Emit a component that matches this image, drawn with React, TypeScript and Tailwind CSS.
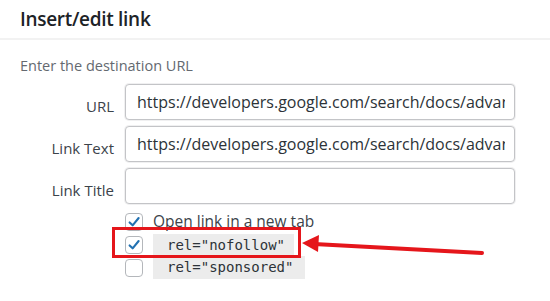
import React from 'react'

const url = 'https://developers.google.com/search/docs/advanced/guidelines/qualify-outbound-links'

function Check({ checked }: { checked?: boolean }) {
  return (
    <span className="flex h-[18px] w-[18px] shrink-0 items-center justify-center rounded-[4px] border border-[#b4b7bb] bg-white">
      {checked && (
        <svg viewBox="0 0 20 20" className="h-[18px] w-[18px]">
          <path d="M4.5 10.5 L8.3 14.2 L15.8 5" fill="none" stroke="#2271b1" strokeWidth={2.6} strokeLinecap="round" strokeLinejoin="round" />
        </svg>
      )}
    </span>
  )
}

function Field({ label, value }: { label: string; value?: string }) {
  return (
    <div className="flex items-center">
      <label className="w-[114px] shrink-0 pt-[8px] text-right text-[15px] text-[#3c434a]">{label}</label>
      <div className="ml-[11px] h-[36px] w-[390px] rounded-[4px] border border-[#c3c4c7] bg-white pl-[11px] pr-[9px] shadow-[0_0_0_1px_#f0f0f1]">
        <div className="overflow-hidden whitespace-nowrap text-[16px] leading-[34px] text-[#2c3338]">{value}</div>
      </div>
    </div>
  )
}

export default function App() {
  return (
    <div className="relative h-[301px] w-[550px] overflow-hidden bg-white" style={{ fontFamily: '"Open Sans", "Noto Sans", sans-serif' }}>
      <div className="flex h-[40px] items-center border-b-2 border-[#f2f2f2] px-[20px]">
        <h1 className="text-[19px] font-semibold tracking-[-0.3px] text-[#1d2327]">Insert/edit link</h1>
      </div>
      <p className="mt-[16px] pl-[20px] text-[14.5px] leading-[20px] text-[#646970]">Enter the destination URL</p>
      <div className="mt-[8px] flex flex-col gap-[6px]">
        <Field label="URL" value={url} />
        <Field label="Link Text" value={url} />
        <Field label="Link Title" />
      </div>
      <div className="ml-[125px] mt-[7px] flex flex-col">
        <div className="flex h-[21px] items-center gap-[10px]">
          <Check checked />
          <span className="text-[15.5px] text-[#3c434a]">Open link in a new tab</span>
        </div>
        <div className="mt-[2px] flex h-[22px] items-center gap-[10px]">
          <Check checked />
          <code className="bg-[#ececec] pl-[14px] pr-[9px] text-[14px] leading-[22px] text-[#2c3338]" style={{ fontFamily: '"DejaVu Sans Mono", monospace' }}>rel="nofollow"</code>
        </div>
        <div className="flex h-[23px] items-center gap-[10px]">
          <Check />
          <code className="bg-[#ececec] pl-[14px] pr-[12px] text-[14px] leading-[23px] text-[#2c3338]" style={{ fontFamily: '"DejaVu Sans Mono", monospace' }}>rel="sponsored"</code>
        </div>
      </div>
      <div className="absolute left-[112px] top-[227px] h-[31px] w-[189px] border-[3px] border-[#e5161b]" />
      <svg className="absolute left-0 top-0" width="550" height="301">
        <line x1="482" y1="253" x2="314" y2="244" stroke="#e5161b" strokeWidth={4} strokeLinecap="round" />
        <polygon points="302,243 319,235 318,252" fill="#e5161b" />
      </svg>
    </div>
  )
}
